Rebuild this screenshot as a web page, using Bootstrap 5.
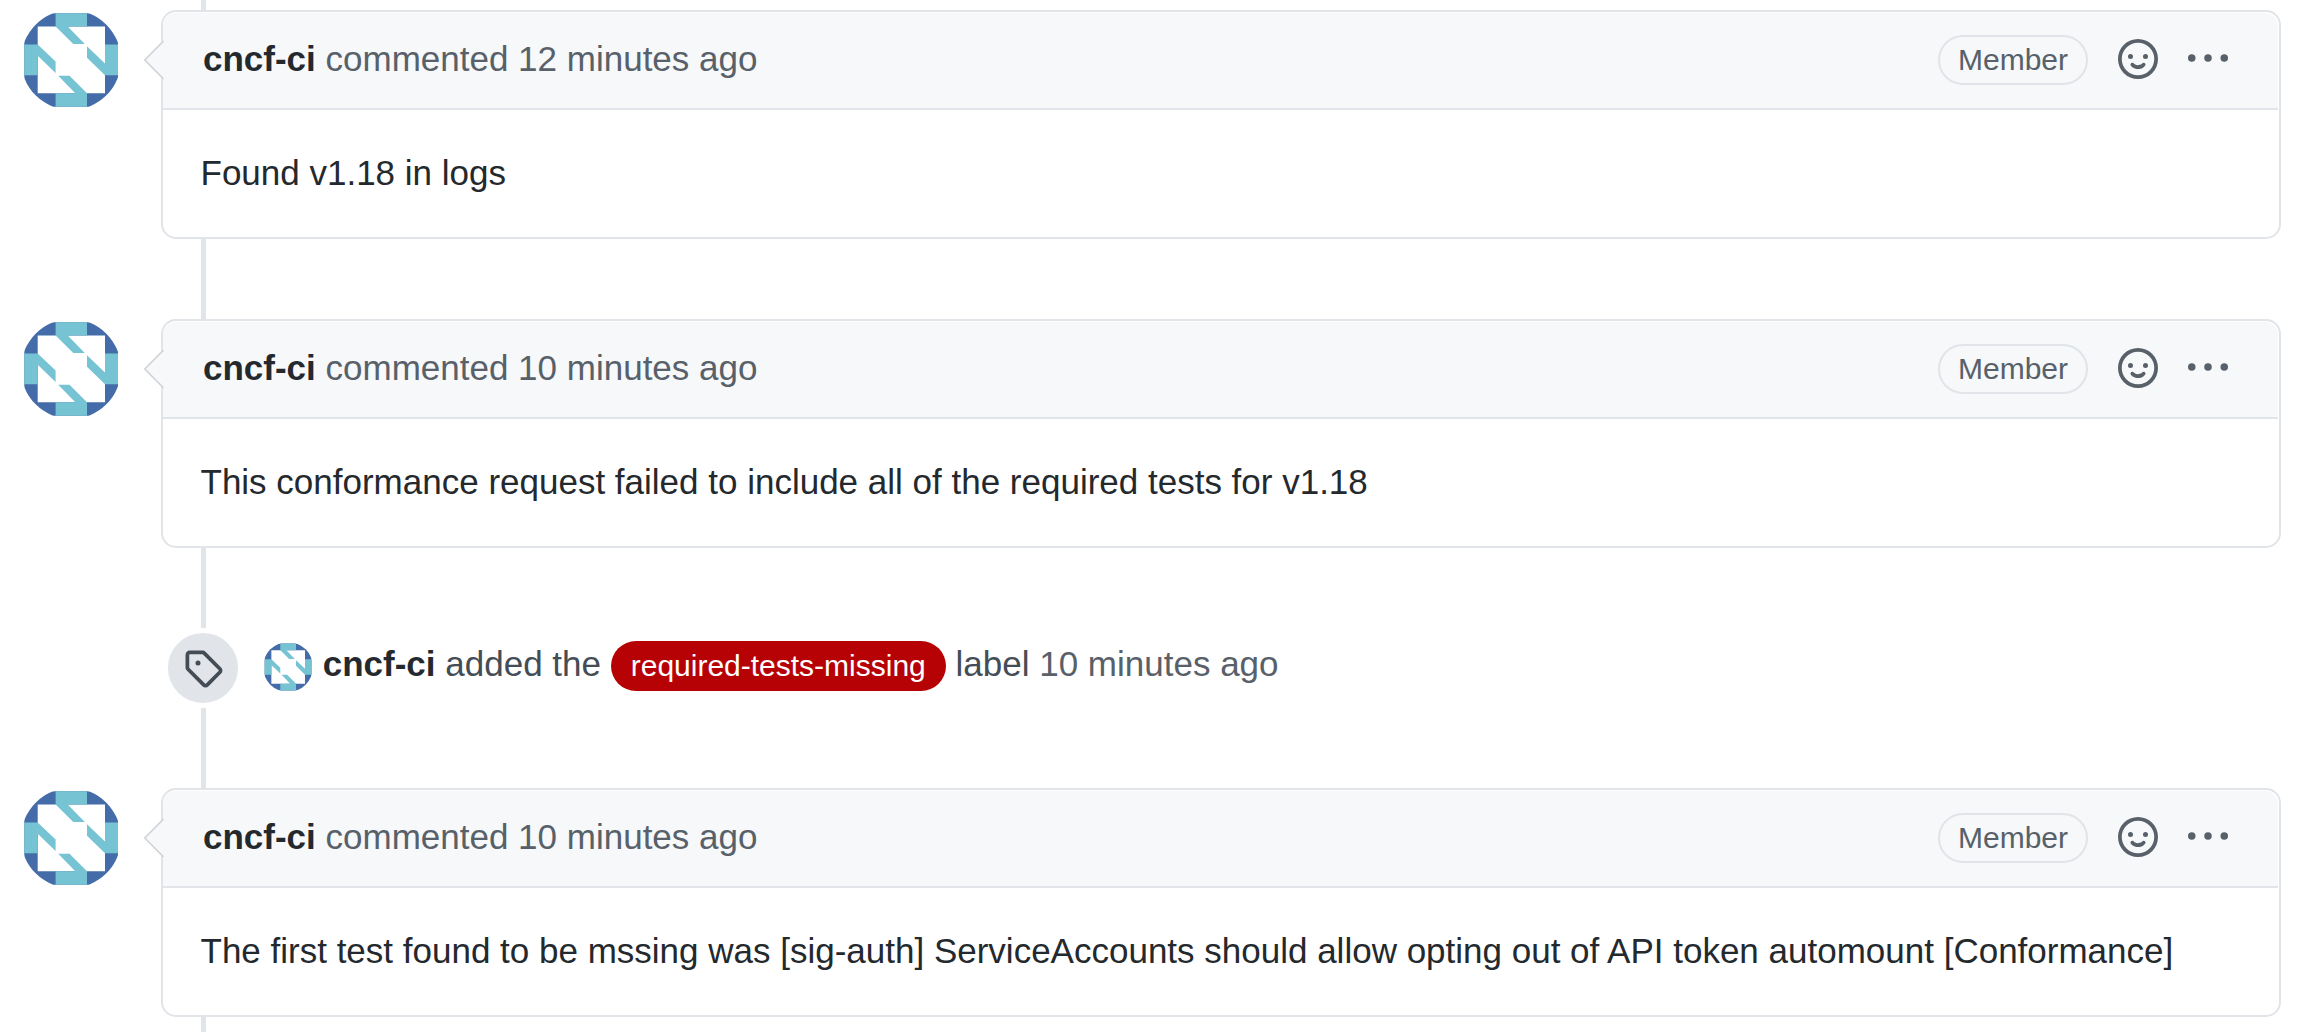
<!DOCTYPE html>
<html lang="en">
<head>
<meta charset="utf-8">
<meta name="viewport" content="width=device-width, initial-scale=1">
<title>Conformance discussion</title>
<link rel="stylesheet" href="https://cdn.jsdelivr.net/npm/bootstrap@5.3.0/dist/css/bootstrap.min.css">
<style>
  body { font-family: "Liberation Sans", Arial, sans-serif; font-size: 35px; line-height: 52px; color: #24292e; background: #fff; }
  .timeline { height: 1032px; padding: 10px 17px 0 21px; }
  /* vertical thread line running behind the items */
  .timeline::before { content: ""; position: absolute; top: 0; bottom: 0; left: 201px; width: 5px; background: #e1e4e8; }
  .comment-row { gap: 40px; }
  .avatar-lg { width: 100px; height: 100px; }
  .avatar-sm { width: 50px; height: 50px; vertical-align: -16px; }
  .comment-box { height: 229px; border: 2px solid #e1e4e8; border-radius: 15px; }
  .comment-head { height: 97px; margin-top: 1px; margin-right: 1px; padding: 0 50px 0 40px; background: #f6f8fa; border: 0; border-bottom: 2px solid #e1e4e8; border-radius: 13px 13px 0 0 !important; color: #586069; }
  .comment-title { padding-bottom: 4px; }
  .comment-text { padding: 37px 36px 0 37.5px; }
  .pointer { left: -20px; top: 27px; width: 21px; height: 42px; }
  .author { color: #24292e; font-weight: 700; }
  .role-pill { height: 50px; width: 150px; border: 2px solid #e1e4e8; font-size: 30px; line-height: 46px; margin: -1px 30px 0 0; }
  .head-icon { width: 40px; height: 40px; fill: #586069; }
  .smile { margin-right: 30px; margin-top: -3px; }
  .dots { margin-top: -5px; }
  .gap-after { margin-bottom: 80px; }
  .event-row { height: 80px; margin-left: 142px; margin-bottom: 80px; color: #444d56; }
  .event-badge { width: 80px; height: 80px; background: #e1e4e8; border: 5px solid #fff; margin-right: 20px; }
  .event-badge svg { width: 40px; height: 40px; fill: #444d56; }
  .event-text { padding-bottom: 6px; }
  .event-label { height: 50px; padding: 0 20px; font-size: 30px; line-height: 50px; background: #b60205; color: #fff; }
  .when { color: #586069; }
</style>
<script src="https://cdn.jsdelivr.net/npm/bootstrap@5.3.0/dist/js/bootstrap.bundle.min.js"></script>
</head>
<body class="overflow-hidden">
<svg class="d-none" xmlns="http://www.w3.org/2000/svg">
  <symbol id="logo" viewBox="0 0 100 100">
    <path fill="#446ca9" fill-rule="evenodd" d="M3.3 3.2H97V96.8H3.3zM16.7 16.4V83.3H84V16.4z"/>
    <path fill="#76c4d3" d="M34.6 3.2H66V16.4H46.7L63.8 34H52.3L34.6 16.4zM3.3 34.4H16.7L34.6 51.5V63L16.7 45.8V65.3H3.3zM66 36.3L84 53.6V34.4H97V65.3H84L66 47.7zM37.2 65.7H48.5L66 83.3V96.8H34.6V83.3H54.3z"/>
  </symbol>
  <symbol id="smiley" viewBox="0 0 16 16"><path fill-rule="evenodd" d="M1.5 8a6.5 6.5 0 1113 0 6.5 6.5 0 01-13 0zM8 0a8 8 0 100 16A8 8 0 008 0zM5 8a1 1 0 100-2 1 1 0 000 2zm7-1a1 1 0 11-2 0 1 1 0 012 0zM5.32 9.636a.75.75 0 011.038.175l.007.009c.103.118.22.222.35.31.264.178.683.37 1.285.37.602 0 1.02-.192 1.285-.371.13-.088.247-.192.35-.31l.007-.008a.75.75 0 111.222.87l-.614-.431c.614.43.614.431.613.431v.001l-.001.002-.002.003-.005.007-.014.019a1.984 1.984 0 01-.184.213c-.16.166-.338.316-.53.445-.63.418-1.37.638-2.127.629-.946 0-1.652-.308-2.126-.63a3.32 3.32 0 01-.715-.657l-.014-.02-.005-.006-.002-.003v-.002h-.001l.613-.432-.614.43a.75.75 0 01.183-1.044z"/></symbol>
  <symbol id="kebab" viewBox="0 0 16 16"><circle cx="1.5" cy="8" r="1.5"/><circle cx="8" cy="8" r="1.5"/><circle cx="14.5" cy="8" r="1.5"/></symbol>
  <symbol id="tag" viewBox="0 0 16 16"><path fill-rule="evenodd" d="M2.5 7.775V2.75a.25.25 0 01.25-.25h5.025a.25.25 0 01.177.073l6.25 6.25a.25.25 0 010 .354l-5.025 5.025a.25.25 0 01-.354 0l-6.25-6.25a.25.25 0 01-.073-.177zm-1.5 0V2.75C1 1.784 1.784 1 2.75 1h5.025c.464 0 .91.184 1.238.513l6.25 6.25a1.75 1.75 0 010 2.474l-5.026 5.026a1.75 1.75 0 01-2.474 0l-6.25-6.25A1.75 1.75 0 011 7.775zM6 5a1 1 0 100 2 1 1 0 000-2z"/></symbol>
  <symbol id="arrow" viewBox="0 0 21 42"><path fill="#f6f8fa" d="M21 2L2 21L21 40z"/><path fill="none" stroke="#d1d5da" stroke-width="1.7" d="M20.5 2L1.8 21L20.5 40"/></symbol>
</svg>

<main class="timeline position-relative">
  <article class="comment-row d-flex align-items-start gap-after">
    <svg class="avatar-lg rounded-circle flex-shrink-0"><use href="#logo"/></svg>
    <div class="comment-box card flex-grow-1">
      <svg class="pointer position-absolute"><use href="#arrow"/></svg>
      <header class="comment-head card-header d-flex align-items-center">
        <div class="comment-title me-auto"><span class="author">cncf-ci</span> commented 12 minutes ago</div>
        <span class="role-pill rounded-pill text-center">Member</span>
        <svg class="head-icon smile"><use href="#smiley"/></svg>
        <svg class="head-icon dots"><use href="#kebab"/></svg>
      </header>
      <div class="comment-text">Found v1.18 in logs</div>
    </div>
  </article>

  <article class="comment-row d-flex align-items-start gap-after">
    <svg class="avatar-lg rounded-circle flex-shrink-0"><use href="#logo"/></svg>
    <div class="comment-box card flex-grow-1">
      <svg class="pointer position-absolute"><use href="#arrow"/></svg>
      <header class="comment-head card-header d-flex align-items-center">
        <div class="comment-title me-auto"><span class="author">cncf-ci</span> commented 10 minutes ago</div>
        <span class="role-pill rounded-pill text-center">Member</span>
        <svg class="head-icon smile"><use href="#smiley"/></svg>
        <svg class="head-icon dots"><use href="#kebab"/></svg>
      </header>
      <div class="comment-text">This conformance request failed to include all of the required tests for v1.18</div>
    </div>
  </article>

  <div class="event-row d-flex align-items-center position-relative">
    <div class="event-badge rounded-circle d-flex align-items-center justify-content-center flex-shrink-0"><svg><use href="#tag"/></svg></div>
    <div class="event-text text-nowrap"><svg class="avatar-sm rounded-circle"><use href="#logo"/></svg> <span class="author">cncf-ci</span> added the <span class="event-label d-inline-block rounded-pill">required-tests-missing</span> label <span class="when">10 minutes ago</span></div>
  </div>

  <article class="comment-row d-flex align-items-start">
    <svg class="avatar-lg rounded-circle flex-shrink-0"><use href="#logo"/></svg>
    <div class="comment-box card flex-grow-1">
      <svg class="pointer position-absolute"><use href="#arrow"/></svg>
      <header class="comment-head card-header d-flex align-items-center">
        <div class="comment-title me-auto"><span class="author">cncf-ci</span> commented 10 minutes ago</div>
        <span class="role-pill rounded-pill text-center">Member</span>
        <svg class="head-icon smile"><use href="#smiley"/></svg>
        <svg class="head-icon dots"><use href="#kebab"/></svg>
      </header>
      <div class="comment-text">The first test found to be mssing was [sig-auth] ServiceAccounts should allow opting out of API token automount [Conformance]</div>
    </div>
  </article>
</main>
</body>
</html>
